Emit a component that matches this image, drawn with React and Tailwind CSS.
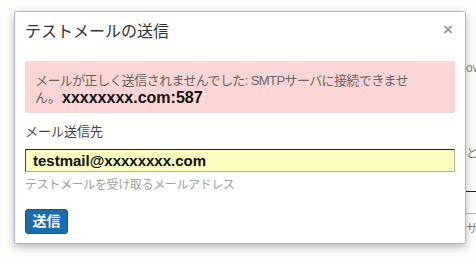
import React from "react";

const F = { fontFamily: '"Liberation Sans", "Noto Sans CJK JP", sans-serif' };

export default function App() {
  return (
    <div className="relative w-[476px] h-[258px] overflow-hidden bg-[#fdfdfb]" style={F}>
      {/* background page fragments */}
      <div className="flex flex-col pl-[440px] pt-[61px] text-[12px] leading-[14px] text-[#888] whitespace-nowrap">
        <div className="pl-[26px]">ow</div>
        <div className="pl-[26px] mt-[72px]">と和</div>
        <div className="mt-[30px] h-px bg-[#222]" />
        <div className="mt-[21px] h-px bg-[#bbb]" />
        <div className="pl-[26px] mt-[8px]">サー</div>
      </div>

      {/* dialog */}
      <div className="absolute left-[14px] top-[11px] w-[452px] h-[233px] bg-[#fffffd] border border-[#a7b6e0] rounded-[2px] shadow-[0_3px_8px_rgba(0,0,0,0.28)] px-[10px] pt-[8px] flex flex-col">
        <div className="flex items-center justify-between h-[24px]">
          <div className="text-[16px] leading-[24px] text-[#333]">テストメールの送信</div>
          <div className="text-[17px] font-bold leading-[20px] text-[#9a9a9a] mr-[2px] -mt-[4px]">×</div>
        </div>
        <div className="mt-[17px] bg-[#fbd6d5] rounded-[2px] px-[10px] pt-[11px] pb-[7px] leading-[17px] whitespace-nowrap">
          <div className="text-[13px] text-[#666] tracking-[-0.6px]">メールが正しく送信されませんでした: SMTPサーバに接続できませ</div>
          <div className="text-[13px] text-[#666] flex items-end">
            <span>ん。</span>
            <span className="text-[16px] font-bold text-[#111] ml-[1px]">xxxxxxxx.com:587</span>
          </div>
        </div>
        <div className="mt-[10px] text-[13px] leading-[18px] text-[#444]">メール送信先</div>
        <div className="mt-[8px] h-[23px] bg-[#fbfcc0] border border-[#b0b0a0] border-t-[#222] border-l-[#444] pl-[7px] flex items-center">
          <span className="text-[15px] font-bold text-[#111] leading-[20px]">testmail@xxxxxxxx.com</span>
        </div>
        <div className="mt-[5px] text-[12px] leading-[16px] text-[#a0a0a0] tracking-[-0.35px]">テストメールを受け取るメールアドレス</div>
        <div className="mt-[16px] flex">
          <div className="w-[43px] h-[25px] rounded-[3px] bg-[#1b6cab] border border-[#145a92] flex items-center justify-center text-white text-[14px] font-bold">送信</div>
        </div>
      </div>
    </div>
  );
}
